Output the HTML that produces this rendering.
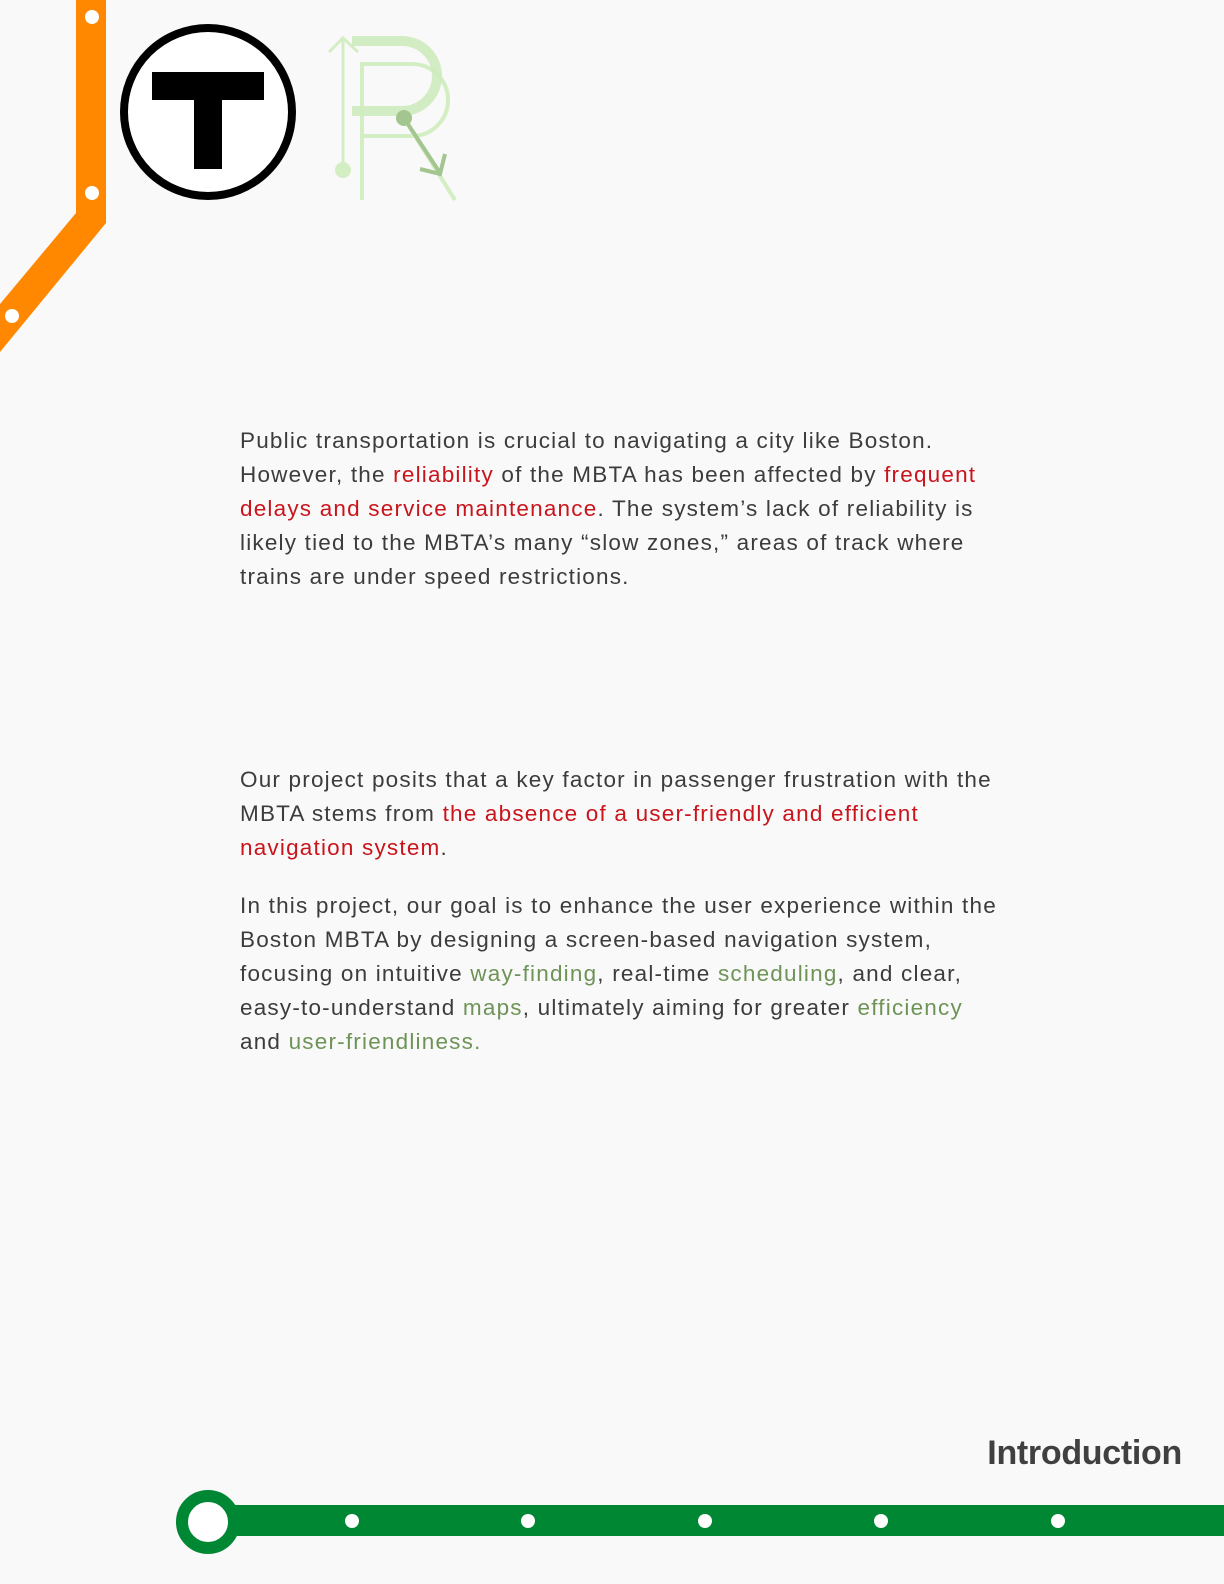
<!DOCTYPE html>
<html><head><meta charset="utf-8"><style>
html,body{margin:0;padding:0;}
body{width:1224px;height:1584px;background:#f9f9f9;position:relative;overflow:hidden;font-family:"Liberation Sans",sans-serif;}
.p{position:absolute;left:240px;width:900px;font-size:22.5px;letter-spacing:1.2px;line-height:34px;color:#3c3c3c;margin:0;white-space:nowrap;}
.r{color:#c9141c;}
.g{color:#6e9357;}
h1{position:absolute;right:42px;top:1434px;margin:0;font-size:34px;font-weight:bold;color:#404040;letter-spacing:-0.3px;}
</style></head><body>
<svg width="1224" height="1584" style="position:absolute;left:0;top:0">
<polygon points="76,0 106,0 106,223 0,352 0,304 76,213" fill="#ff8800"/>
<circle cx="92" cy="17" r="7" fill="#fff"/>
<circle cx="92" cy="193" r="7" fill="#fff"/>
<circle cx="12" cy="316" r="7" fill="#fff"/>
<circle cx="208" cy="112" r="84" fill="#fff" stroke="#000" stroke-width="8"/>
<rect x="152" y="72" width="112" height="28" fill="#000"/>
<rect x="194" y="99" width="28" height="70" fill="#000"/>
<g fill="none" stroke="#d4eec4" stroke-width="3">
<line x1="343" y1="38" x2="343" y2="170"/>
<polyline points="329,52 343,38 358,52"/>
<path d="M362,200 V64 H412 A36,36 0 0 1 412,136 H362" stroke-width="4"/>
<line x1="405" y1="120" x2="455" y2="200" stroke-width="4"/>
</g>
<path d="M352,41 H402 A34,34 0 0 1 402,111 H352" fill="none" stroke="#cdebbd" stroke-width="10" opacity="0.9"/>
<circle cx="343" cy="170" r="8" fill="#d4eec4"/>
<g stroke="#a3c58f" stroke-width="4" fill="none">
<line x1="404" y1="118" x2="440" y2="173"/>
<polyline points="420,169 440,174 445,154"/>
</g>
<circle cx="404" cy="118" r="8" fill="#a3c58f"/>
<rect x="215" y="1505" width="1009" height="31" fill="#008733"/>
<circle cx="208" cy="1522" r="26" fill="#fff" stroke="#008733" stroke-width="12"/>
<circle cx="352" cy="1521" r="7" fill="#fff"/>
<circle cx="528" cy="1521" r="7" fill="#fff"/>
<circle cx="705" cy="1521" r="7" fill="#fff"/>
<circle cx="881" cy="1521" r="7" fill="#fff"/>
<circle cx="1058" cy="1521" r="7" fill="#fff"/>
</svg>
<p class="p" style="top:424px">Public transportation is crucial to navigating a city like Boston.<br>However, the <span class="r">reliability</span> of the MBTA has been affected by <span class="r">frequent</span><br><span class="r">delays and service maintenance</span>. The system’s lack of reliability is<br>likely tied to the MBTA’s many “slow zones,” areas of track where<br>trains are under speed restrictions.</p>
<p class="p" style="top:763px">Our project posits that a key factor in passenger frustration with the<br>MBTA stems from <span class="r">the absence of a user-friendly and efficient</span><br><span class="r">navigation system</span>.</p>
<p class="p" style="top:889px">In this project, our goal is to enhance the user experience within the<br>Boston MBTA by designing a screen-based navigation system,<br>focusing on intuitive <span class="g">way-finding</span>, real-time <span class="g">scheduling</span>, and clear,<br>easy-to-understand <span class="g">maps</span>, ultimately aiming for greater <span class="g">efficiency</span><br>and <span class="g">user-friendliness.</span></p>
<h1>Introduction</h1>
</body></html>
